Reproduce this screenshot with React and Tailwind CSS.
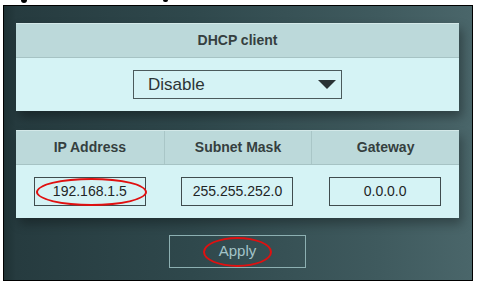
export default function App() {
  const cols = [
    { titre: 'IP Address', valeur: '192.168.1.5', entoure: true },
    { titre: 'Subnet Mask', valeur: '255.255.252.0' },
    { titre: 'Gateway', valeur: '0.0.0.0' },
  ]

  return (
    <div className="w-[482px] h-[295px] bg-white overflow-hidden font-['Liberation_Sans',Arial,sans-serif]">
      {/* bouts de texte coupés en haut */}
      <div className="h-[5px] relative">
        <span className="absolute left-[21px] top-0 w-[6px] h-[3px] rounded-b-full bg-black" />
        <span className="absolute left-[163px] top-0 w-[5px] h-[2px] rounded-b-full bg-black" />
      </div>

      <div className="ml-[3px] w-[470px] h-[276px] border border-black bg-[linear-gradient(90deg,#1e3134_0px,#263b3f_12px,#2f484c_40%,#3f5a5e_80%,#4a666a_100%)] pl-[12px] pt-[17px]">
        <div className="w-[443px]">
          {/* DHCP client */}
          <div className="shadow-[3px_6px_10px_rgba(0,0,0,0.35)]">
            <div className="h-[35px] bg-[#bcd9da] border-t border-[#d3e8e8] border-b border-b-[#a6c3c4] flex items-center justify-center text-[14px] font-bold text-[#353f40]">
              DHCP client
            </div>
            <div className="h-[53px] bg-[#d5f3f5] flex items-center justify-center">
              <div className="w-[209px] h-[29px] border border-[#4b5a5c] flex items-center justify-between pl-[14px] pr-[5px]">
                <span className="text-[17px] text-[#2c3536]">Disable</span>
                <svg width="18" height="9" viewBox="0 0 18 9">
                  <polygon points="0,0 18,0 9,9" fill="#2a3234" />
                </svg>
              </div>
            </div>
          </div>

          {/* Adresses */}
          <div className="mt-[19px] shadow-[3px_6px_10px_rgba(0,0,0,0.3)]">
            <div className="h-[35px] bg-[#bcd9da] border-t border-[#d3e8e8] border-b border-b-[#a6c3c4] grid grid-cols-3">
              {cols.map((c, i) => (
                <div key={c.titre}
                  className={`flex items-center justify-center text-[14px] font-bold text-[#353f40] ${i > 0 ? 'border-l border-[#a9c6c7]' : ''}`}>
                  {c.titre}
                </div>
              ))}
            </div>
            <div className="h-[53px] bg-[#d5f3f5] grid grid-cols-3">
              {cols.map(c => (
                <div key={c.titre} className="flex items-center justify-center">
                  <div className="relative w-[112px] h-[29px] border border-[#3f4c4e] flex items-center justify-center text-[14px] text-[#1e2526]">
                    {c.valeur}
                    {c.entoure && (
                      <span className="absolute left-[1px] top-0 w-[111px] h-[28px] border-2 border-[#e01010] rounded-[50%]" />
                    )}
                  </div>
                </div>
              ))}
            </div>
          </div>

          <div className="mt-[17px] flex justify-center">
            <div className="relative w-[137px] h-[33px] border border-[#8db0b2] flex items-center justify-center text-[15px] text-[#a3c4c8]">
              Apply
              <span className="absolute left-[33px] top-[1px] w-[69px] h-[30px] border-2 border-[#e01010] rounded-[50%]" />
            </div>
          </div>
        </div>
      </div>
    </div>
  )
}
